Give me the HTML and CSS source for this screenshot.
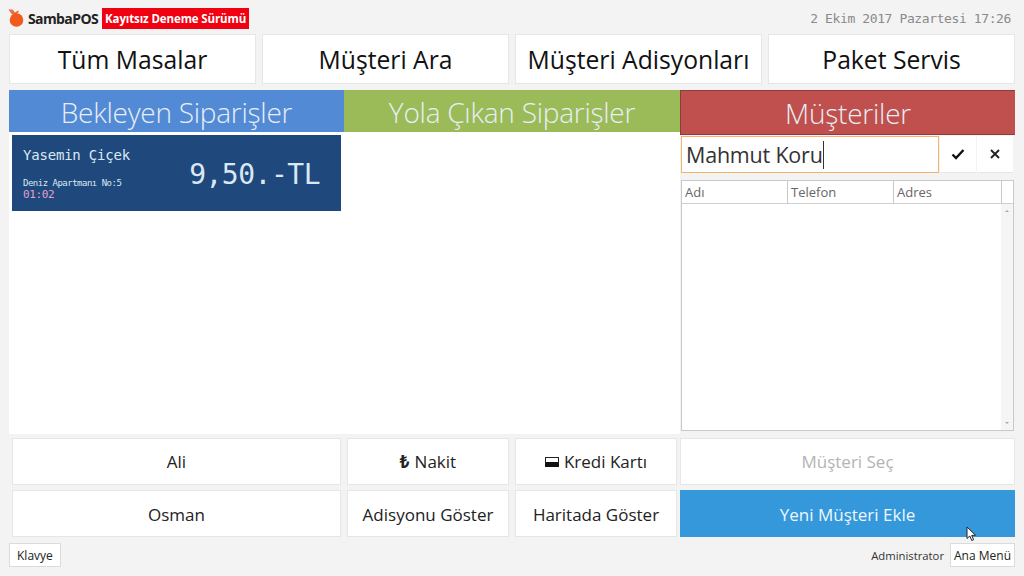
FILE: index.html
```html
<!DOCTYPE html>
<html lang="tr">
<head>
    <meta charset="utf-8">
    <title>SambaPOS</title>
    <link rel="stylesheet" href="styles.css">
</head>
<body>
    <div id="app">
        <div id="topbar">
            <svg class="logo" width="17" height="18" viewBox="0 0 17 18">
                <path d="M0.5 0.5 L4.5 0.5 L7 3.5 L10 1.5 L11 2.5 L8 6 L4 5.5 Z" fill="#e8703a"/>
                <circle cx="8.5" cy="11" r="6.8" fill="#f15a1c"/>
            </svg>
            <span class="brand">SambaPOS</span>
            <span class="trial">Kayıtsız Deneme Sürümü</span>
            <span class="clock">2 Ekim 2017 Pazartesi 17:26</span>
        </div>

        <div id="nav">
            <div class="nav-button">Tüm Masalar</div>
            <div class="nav-button">Müşteri Ara</div>
            <div class="nav-button">Müşteri Adisyonları</div>
            <div class="nav-button">Paket Servis</div>
        </div>

        <div id="content">
            <div id="orders">
                <div class="heads">
                    <div class="head blue">Bekleyen Siparişler</div>
                    <div class="head green">Yola Çıkan Siparişler</div>
                </div>
                <div class="order-area">
                    <div class="ticket">
                        <div class="ticket-left">
                            <div class="ticket-name">Yasemin Çiçek</div>
                            <div class="ticket-address">Deniz Apartmanı No:5</div>
                            <div class="ticket-time">01:02</div>
                        </div>
                        <div class="ticket-total">9,50.-TL</div>
                    </div>
                </div>
            </div>
            <div id="customers">
                <div class="head red">Müşteriler</div>
                <div class="search">
                    <div class="search-input">Mahmut Koru<span class="caret"></span></div>
                    <div class="search-button">
                        <svg width="14" height="12" viewBox="0 0 14 12"><path d="M1.5 6.5 L5 10 L12.5 2" fill="none" stroke="#111" stroke-width="2.4"/></svg>
                    </div>
                    <div class="search-button">
                        <svg width="10" height="10" viewBox="0 0 10 10"><path d="M1 1 L9 9 M9 1 L1 9" fill="none" stroke="#222" stroke-width="1.9"/></svg>
                    </div>
                </div>
                <div class="grid">
                    <div class="grid-head">
                        <div class="col">Adı</div>
                        <div class="col">Telefon</div>
                        <div class="col">Adres</div>
                        <div class="col-end"></div>
                    </div>
                    <div class="grid-body">
                        <div class="rows"></div>
                        <div class="scrollbar"><span class="arrow up"></span><span class="arrow down"></span></div>
                    </div>
                </div>
            </div>
        </div>

        <div id="actions">
            <div class="action">Ali</div>
            <div class="action"><span class="lira">₺</span> Nakit</div>
            <div class="action"><span class="card-icon"></span> Kredi Kartı</div>
            <div class="action disabled">Müşteri Seç</div>
            <div class="action">Osman</div>
            <div class="action">Adisyonu Göster</div>
            <div class="action">Haritada Göster</div>
            <div class="action primary">Yeni Müşteri Ekle
                <svg class="pointer" width="11" height="16" viewBox="0 0 11 16"><path d="M1 1 L1 12.5 L3.8 10 L5.8 14.5 L7.6 13.7 L5.7 9.4 L9.5 9.2 Z" fill="#fff" stroke="#222" stroke-width="1"/></svg>
            </div>
        </div>

        <div id="footer">
            <div class="small-button">Klavye</div>
            <span class="user">Administrator</span>
            <div class="small-button menu">Ana Menü</div>
        </div>
    </div>
</body>
</html>
```
FILE: styles.css
```css
html,body{
    margin: 0;
    background-color: #f3f3f3;
}

#app{
    width: 1024px;
    height: 576px;
    overflow: hidden;
    color: #111;
    font-family: "Open Sans", "Noto Sans", sans-serif;
}

#topbar{
    display: flex;
    align-items: center;
    height: 34px;
    padding: 2px 13px 0 8px;
    box-sizing: border-box;
}
#topbar .logo{
    margin-right: 3px;
}
#topbar .brand{
    font-size: 14px;
    font-weight: 700;
    letter-spacing: -0.6px;
    color: #222;
    margin-right: 4px;
}
#topbar .trial{
    background-color: #f00010;
    color: white;
    font-size: 11.5px;
    font-weight: 700;
    height: 21px;
    line-height: 21px;
    padding: 0 3px;
    letter-spacing: -0.12px;
}
#topbar .clock{
    margin-left: auto;
    font: 13px "DejaVu Sans Mono", monospace;
    letter-spacing: -0.39px;
    color: #8a8a8a;
}

#nav{
    display: grid;
    grid-template-columns: repeat(4, 247px);
    gap: 6px;
    padding: 0 9px;
    height: 50px;
}
.nav-button{
    display: flex;
    align-items: center;
    justify-content: center;
    background-color: white;
    border: 1px solid #e6e6e6;
    box-sizing: border-box;
    font-size: 24.7px;
    color: #111;
}

#content{
    display: flex;
    margin: 6px 9px 0 9px;
    height: 344px;
}
#orders{
    width: 671px;
    display: flex;
    flex-direction: column;
}
.heads{
    display: grid;
    grid-template-columns: 335px 336px;
}
.head{
    height: 42px;
    line-height: 44px;
    text-align: center;
    color: #e8eef5;
    font-size: 28px;
    font-weight: 300;
    box-sizing: border-box;
    letter-spacing: -0.25px;
}
.head.blue{
    background-color: #528ad6;
}
.head.green{
    background-color: #9bbb59;
}
.head.red{
    background-color: #c0504d;
    height: 45px;
    border: 1px solid #8f3c3a;
    border-width: 1px 0 1px 1px;
}
.order-area{
    flex: 1;
    background-color: white;
    padding: 3px 3px;
}
.ticket{
    display: flex;
    justify-content: space-between;
    width: 329px;
    height: 76px;
    box-sizing: border-box;
    padding: 12px 21px 0 11px;
    background-color: #1f497d;
    color: #dbe8f4;
    font-family: "DejaVu Sans Mono", monospace;
}
.ticket-name{
    font-size: 14px;
    letter-spacing: -0.2px;
    height: 30px;
}
.ticket-address{
    font-size: 9px;
    letter-spacing: -0.5px;
    line-height: 12px;
}
.ticket-time{
    font-size: 11px;
    line-height: 12px;
    margin-top: 0;
    letter-spacing: -0.4px;
    color: #e6a0c8;
}
.ticket-total{
    font-size: 28px;
    letter-spacing: -0.5px;
    margin-top: 11px;
}

#customers{
    width: 335px;
    display: flex;
    flex-direction: column;
}
.search{
    display: flex;
    height: 37px;
    margin: 1px 1px 0 1px;
    gap: 1px;
}
.search-input{
    width: 258px;
    box-sizing: border-box;
    border: 1px solid #f2b46c;
    background-color: white;
    font-size: 21.5px;
    line-height: 36px;
    padding-left: 4px;
    letter-spacing: -0.2px;
    color: #333;
    white-space: nowrap;
}
.caret{
    display: inline-block;
    width: 1px;
    height: 28px;
    background-color: #333;
    vertical-align: -6px;
}
.search-button{
    width: 36px;
    display: flex;
    align-items: center;
    justify-content: center;
    background-color: white;
    border-bottom: 1px solid #e6e6e6;
    box-sizing: border-box;
}
.grid{
    margin: 7px 1px 0 1px;
    height: 251px;
    border: 1px solid #c9c9c9;
    box-sizing: border-box;
    background-color: white;
    display: flex;
    flex-direction: column;
}
.grid-head{
    display: grid;
    grid-template-columns: 106px 106px 108px 1fr;
    height: 23px;
    border-bottom: 1px solid #d0d0d0;
    box-sizing: border-box;
    background-color: white;
    font-size: 13px;
    line-height: 23px;
    color: #666;
}
.col{
    padding-left: 3px;
    border-right: 1px solid #c9c9c9;
}
.grid-body{
    flex: 1;
    display: flex;
}
.rows{
    flex: 1;
}
.scrollbar{
    width: 12px;
    background-color: #f5f5f5;
    display: flex;
    flex-direction: column;
    justify-content: space-between;
    align-items: center;
    padding: 6px 0;
    box-sizing: border-box;
}
.arrow{
    width: 0;
    height: 0;
    border-left: 2px solid transparent;
    border-right: 2px solid transparent;
}
.arrow.up{
    border-bottom: 2px solid #aaa;
}
.arrow.down{
    border-top: 2px solid #aaa;
}

#actions{
    display: grid;
    grid-template-columns: 329px 162px 162px 332px;
    grid-template-rows: 47px 47px;
    column-gap: 6px;
    row-gap: 5px;
    margin: 4px 9px 0 12px;
}
.action{
    position: relative;
    display: flex;
    align-items: center;
    justify-content: center;
    gap: 5px;
    background-color: white;
    border: 1px solid #e6e6e6;
    box-sizing: border-box;
    font-size: 17px;
    color: #222;
}
.action:nth-child(4n){
    margin-left: -3px;
}
.action:nth-child(n+5){
    padding-top: 2px;
}
.action.disabled{
    color: #b4b4b4;
}
.action.primary{
    background-color: #3498db;
    border-color: #3498db;
    color: #eef6fc;
}
.pointer{
    position: absolute;
    left: 285px;
    top: 35px;
}
.lira{
    font-weight: 700;
}
.card-icon{
    display: inline-block;
    width: 14px;
    height: 10px;
    border: 1px solid #222;
    border-bottom: 5px solid #111;
    box-sizing: border-box;
}

#footer{
    display: flex;
    align-items: center;
    margin: 6px 9px 0 9px;
    height: 24px;
}
.small-button{
    height: 24px;
    line-height: 24px;
    padding: 0 7px;
    background-color: white;
    border: 1px solid #dcdcdc;
    box-sizing: border-box;
    font-size: 12px;
    color: #222;
}
.small-button.menu{
    padding: 0 3px;
}
.user{
    margin-left: auto;
    margin-right: 6px;
    font-size: 11.3px;
    color: #333;
}
```
